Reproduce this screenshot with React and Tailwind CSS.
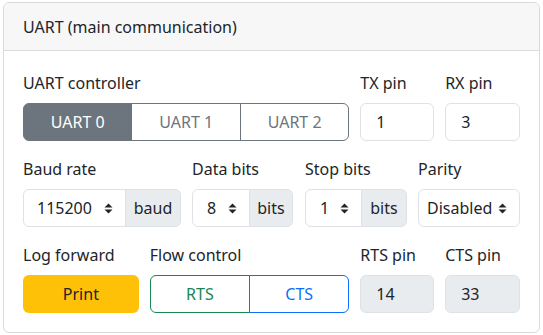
import React from 'react'

function Label({ children }) {
  return <div className="mb-2 h-6 leading-6 text-[16px] text-[#212529]">{children}</div>
}

function SortIcon() {
  return (
    <svg width="9" height="11" viewBox="0 0 9 11" className="shrink-0">
      <path d="M4.5 0.5 L8.5 4.5 L0.5 4.5 Z" fill="#212529" />
      <path d="M0.5 6.5 L8.5 6.5 L4.5 10.5 Z" fill="#212529" />
    </svg>
  )
}

function SelectAddon({ value, unit, selW, addW, pl }) {
  return (
    <div className="flex h-[38px]">
      <div
        className={`flex items-center justify-between ${selW} ${pl} pr-3 border border-[#dee2e6] rounded-l-[6px] bg-white text-[#212529]`}
      >
        <span>{value}</span>
        <SortIcon />
      </div>
      <div
        className={`flex items-center justify-center ${addW} -ml-px border border-[#dee2e6] rounded-r-[6px] bg-[#e9ecef] text-[#212529]`}
      >
        {unit}
      </div>
    </div>
  )
}

function PinInput({ value, disabled }) {
  return (
    <div
      className={`flex items-center h-[38px] px-[15px] border border-[#dee2e6] rounded-[6px] text-[#212529] ${
        disabled ? 'bg-[#e9ecef]' : 'bg-white'
      }`}
    >
      {value}
    </div>
  )
}

export default function App() {
  return (
    <div className="w-[543px] h-[335px] pt-[2px] pl-[3px] bg-white" style={{ fontFamily: '"Noto Sans", sans-serif' }}>
      <div className="w-[537px] h-[331px] border border-[#d9d9d9] rounded-[6px] overflow-hidden text-[16px]">
        <div className="h-[48px] px-[19px] flex items-center bg-[#f7f7f7] border-b border-[#dcdcdc] text-[#212529]">
          UART (main communication)
        </div>

        <div className="px-[19px] pt-[20px] flex flex-col gap-4">
          {/* row 1 */}
          <div className="flex gap-[11px]">
            <div className="w-[327px]">
              <Label>UART controller</Label>
              <div className="flex h-[38px]">
                <div className="flex-1 flex items-center justify-center bg-[#6c757d] border border-[#6c757d] text-white rounded-l-[6px]">
                  UART 0
                </div>
                <div className="flex-1 flex items-center justify-center bg-white border border-[#6c757d] -ml-px text-[#6c757d]">
                  UART 1
                </div>
                <div className="flex-1 flex items-center justify-center bg-white border border-[#6c757d] -ml-px text-[#6c757d] rounded-r-[6px]">
                  UART 2
                </div>
              </div>
            </div>
            <div className="w-[74px]">
              <Label>TX pin</Label>
              <PinInput value="1" />
            </div>
            <div className="w-[75px]">
              <Label>RX pin</Label>
              <PinInput value="3" />
            </div>
          </div>

          {/* row 2 */}
          <div className="flex gap-[11px]">
            <div className="w-[158px]">
              <Label>Baud rate</Label>
              <SelectAddon value="115200" unit="baud" selW="w-[103px]" addW="w-[56px]" pl="pl-[13px]" />
            </div>
            <div className="w-[101px]">
              <Label>Data bits</Label>
              <SelectAddon value="8" unit="bits" selW="w-[58px]" addW="w-[44px]" pl="pl-[14px]" />
            </div>
            <div className="w-[102px] ml-px">
              <Label>Stop bits</Label>
              <SelectAddon value="1" unit="bits" selW="w-[57px]" addW="w-[46px]" pl="pl-[14px]" />
            </div>
            <div className="w-[102px]">
              <Label>Parity</Label>
              <div className="flex items-center justify-between h-[38px] pl-[8px] pr-3 border border-[#dee2e6] rounded-[6px] bg-white text-[#212529]">
                <span>Disabled</span>
                <SortIcon />
              </div>
            </div>
          </div>

          {/* row 3 */}
          <div className="flex gap-[11px]">
            <div className="w-[116px]">
              <Label>Log forward</Label>
              <div className="flex items-center justify-center h-[38px] bg-[#ffc107] rounded-[6px] text-[#212529]">
                Print
              </div>
            </div>
            <div className="w-[200px]">
              <Label>Flow control</Label>
              <div className="flex h-[38px]">
                <div className="flex-1 flex items-center justify-center bg-white border border-[#198754] text-[#198754] rounded-l-[6px]">
                  RTS
                </div>
                <div className="flex-1 flex items-center justify-center bg-white border border-[#0d6efd] -ml-px text-[#0d6efd] rounded-r-[6px]">
                  CTS
                </div>
              </div>
            </div>
            <div className="w-[74px]">
              <Label>RTS pin</Label>
              <PinInput value="14" disabled />
            </div>
            <div className="w-[75px]">
              <Label>CTS pin</Label>
              <PinInput value="33" disabled />
            </div>
          </div>
        </div>
      </div>
    </div>
  )
}
